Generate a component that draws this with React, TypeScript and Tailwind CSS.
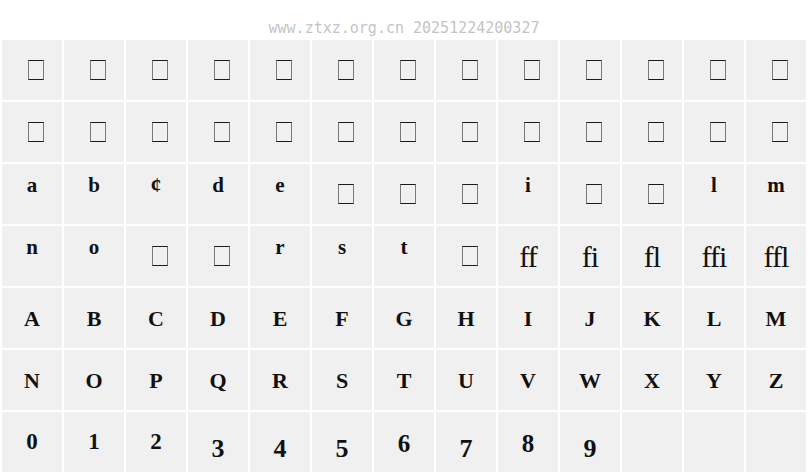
type Kind = "tofu" | "low" | "lig" | "cap" | "dig" | "digd" | "digu" | "empty";

type Cell = { t: string; k: Kind };

const T: Cell = { t: "", k: "tofu" };
const E: Cell = { t: "", k: "empty" };
const low = (t: string): Cell => ({ t, k: "low" });
const lig = (t: string): Cell => ({ t, k: "lig" });
const cap = (t: string): Cell => ({ t, k: "cap" });

const rows: Cell[][] = [
  Array(13).fill(T),
  Array(13).fill(T),
  [low("a"), low("b"), low("¢"), low("d"), low("e"), T, T, T, low("i"), T, T, low("l"), low("m")],
  [low("n"), low("o"), T, T, low("r"), low("s"), low("t"), T, lig("ff"), lig("fi"), lig("fl"), lig("ffi"), lig("ffl")],
  "ABCDEFGHIJKLM".split("").map(cap),
  "NOPQRSTUVWXYZ".split("").map(cap),
  [
    { t: "0", k: "dig" },
    { t: "1", k: "dig" },
    { t: "2", k: "dig" },
    { t: "3", k: "digd" },
    { t: "4", k: "digd" },
    { t: "5", k: "digd" },
    { t: "6", k: "digu" },
    { t: "7", k: "digd" },
    { t: "8", k: "digu" },
    { t: "9", k: "digd" },
    E,
    E,
    E,
  ],
];

const kindClass: Record<Kind, string> = {
  tofu: "pt-[20px]",
  low: "pt-[11px] text-[21px] leading-[21px] font-bold",
  lig: "pt-[16px] text-[30px] leading-[30px] font-normal tracking-[-1px]",
  cap: "pt-[20px] text-[22px] leading-[22px] font-bold",
  dig: "pt-[18px] text-[23px] leading-[23px] font-bold",
  digd: "pt-[24px] text-[26px] leading-[26px] font-bold",
  digu: "pt-[19px] text-[25px] leading-[25px] font-bold",
  empty: "",
};

function GlyphCell({ cell }: { cell: Cell }) {
  return (
    <div className={`flex justify-center items-start h-[60px] bg-[#f0f0f0] text-[#111] ${kindClass[cell.k]}`}>
      {cell.k === "tofu" ? (
        <div className="ml-[8px] w-[16px] h-[20px] border-x border-x-[#7a7a7a] border-y border-y-[#1a1a1a]" />
      ) : (
        <span>{cell.t}</span>
      )}
    </div>
  );
}

export default function App() {
  return (
    <div className="w-[808px] h-[476px] bg-white overflow-hidden">
      <div className="h-[40px] pt-[19px] text-center text-[15px] leading-[18px] text-[#c4c4c4] font-['DejaVu_Sans_Mono',monospace]">
        www.ztxz.org.cn 20251224200327
      </div>
      <div className="grid grid-cols-[repeat(13,60px)] auto-rows-[60px] gap-[2px] px-[2px] font-['Liberation_Serif',serif]">
        {rows.map((row, r) =>
          row.map((cell, c) => <GlyphCell key={`${r}-${c}`} cell={cell} />)
        )}
      </div>
    </div>
  );
}
